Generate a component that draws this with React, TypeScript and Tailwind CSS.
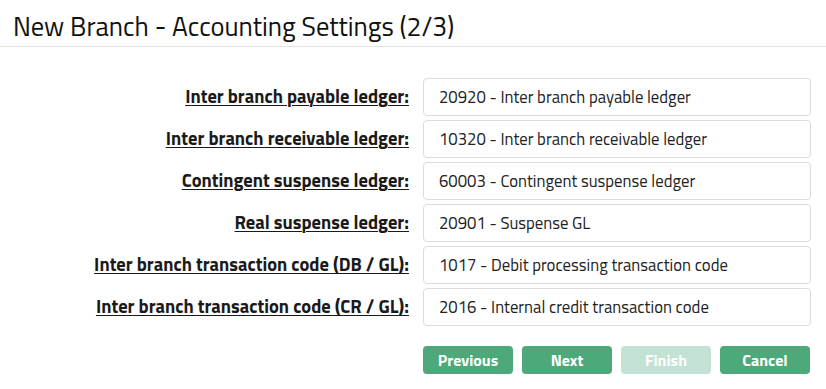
const ROWS = [
  { label: "Inter branch payable ledger:", value: "20920 - Inter branch payable ledger" },
  { label: "Inter branch receivable ledger:", value: "10320 - Inter branch receivable ledger" },
  { label: "Contingent suspense ledger:", value: "60003 - Contingent suspense ledger" },
  { label: "Real suspense ledger:", value: "20901 - Suspense GL" },
  { label: "Inter branch transaction code (DB / GL):", value: "1017 - Debit processing transaction code" },
  { label: "Inter branch transaction code (CR / GL):", value: "2016 - Internal credit transaction code" },
];

const BUTTONS = [
  { label: "Previous", disabled: false },
  { label: "Next", disabled: false },
  { label: "Finish", disabled: true },
  { label: "Cancel", disabled: false },
];

export default function App() {
  return (
    <div className="w-[826px] h-[389px] bg-white font-['Titillium_Web','DejaVu_Sans_Condensed',sans-serif] text-[#1a1a1a]">
      <div className="h-[47px] border-b border-[#e2e2e2] px-[13px] pt-[13px]">
        <h1 className="text-[26.5px] leading-none text-[#111]">New Branch - Accounting Settings (2/3)</h1>
      </div>

      <div className="pt-[31px] pr-[15px]">
        <div className="grid grid-cols-[409px_388px] gap-x-[14px] gap-y-[4px]">
          {ROWS.map(r => (
            <div key={r.label} className="contents">
              <label className="h-[38px] flex items-center justify-end text-[18.5px] font-bold underline underline-offset-2 decoration-1">
                {r.label}
              </label>
              <div className="h-[38px] flex items-center px-[15px] rounded-[4px] border border-[#dcdcdc] text-[16.7px] text-[#222]">
                {r.value}
              </div>
            </div>
          ))}
        </div>

        <div className="mt-[20px] flex justify-end gap-[9px] pr-[1px]">
          {BUTTONS.map(b => (
            <button
              key={b.label}
              disabled={b.disabled}
              className={
                b.disabled
                  ? "w-[90px] h-[28px] rounded-[4px] bg-[#c3e2d3] text-white text-[16px] font-bold"
                  : "w-[90px] h-[28px] rounded-[4px] bg-[#4da97a] text-white text-[16px] font-bold"
              }
            >
              {b.label}
            </button>
          ))}
        </div>
      </div>
    </div>
  );
}
